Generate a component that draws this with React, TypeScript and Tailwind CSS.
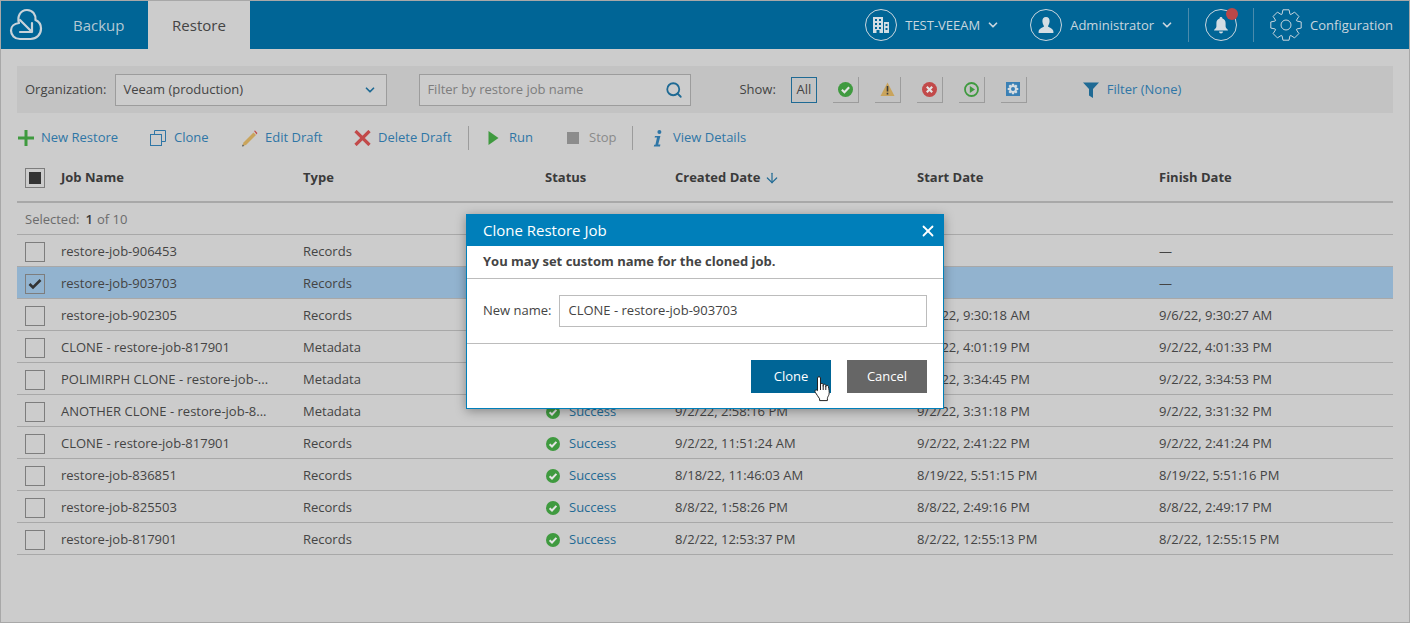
import { ChevronDown, X, Search, ArrowDown } from "lucide-react";
import type { ReactNode } from "react";

const ROWS = [
  { name: "restore-job-906453", type: "Records", status: "Running", created: "9/6/22, 10:12:41 AM", start: "", finish: "—" },
  { name: "restore-job-903703", type: "Records", status: "Draft", created: "9/6/22, 9:44:02 AM", start: "", finish: "—" },
  { name: "restore-job-902305", type: "Records", status: "Success", created: "9/6/22, 9:29:58 AM", start: "9/6/22, 9:30:18 AM", finish: "9/6/22, 9:30:27 AM" },
  { name: "CLONE - restore-job-817901", type: "Metadata", status: "Success", created: "9/2/22, 4:00:51 PM", start: "9/2/22, 4:01:19 PM", finish: "9/2/22, 4:01:33 PM" },
  { name: "POLIMIRPH CLONE - restore-job-...", type: "Metadata", status: "Success", created: "9/2/22, 3:34:12 PM", start: "9/2/22, 3:34:45 PM", finish: "9/2/22, 3:34:53 PM" },
  { name: "ANOTHER CLONE - restore-job-8...", type: "Metadata", status: "Success", created: "9/2/22, 2:58:16 PM", start: "9/2/22, 3:31:18 PM", finish: "9/2/22, 3:31:32 PM" },
  { name: "CLONE - restore-job-817901", type: "Records", status: "Success", created: "9/2/22, 11:51:24 AM", start: "9/2/22, 2:41:22 PM", finish: "9/2/22, 2:41:24 PM" },
  { name: "restore-job-836851", type: "Records", status: "Success", created: "8/18/22, 11:46:03 AM", start: "8/19/22, 5:51:15 PM", finish: "8/19/22, 5:51:16 PM" },
  { name: "restore-job-825503", type: "Records", status: "Success", created: "8/8/22, 1:58:26 PM", start: "8/8/22, 2:49:16 PM", finish: "8/8/22, 2:49:17 PM" },
  { name: "restore-job-817901", type: "Records", status: "Success", created: "8/2/22, 12:53:37 PM", start: "8/2/22, 12:55:13 PM", finish: "8/2/22, 12:55:15 PM" },
];

const COLS = "grid grid-cols-[44px_242px_242px_130px_242px_242px_1fr] items-center";

function gearPath(cx: number, cy: number, outer: number, inner: number, teeth: number) {
  const pts: string[] = [];
  const step = (Math.PI * 2) / teeth;
  for (let i = 0; i < teeth; i++) {
    const a = i * step - Math.PI / 2;
    const offs: [number, number][] = [
      [-0.5, inner], [-0.28, outer], [0.28, outer], [0.5, inner],
    ];
    offs.forEach(([o, r]) => {
      const t = a + o * step * 0.9;
      pts.push(`${(cx + r * Math.cos(t)).toFixed(2)} ${(cy + r * Math.sin(t)).toFixed(2)}`);
    });
  }
  return "M" + pts.join("L") + "Z";
}

function Logo() {
  return (
    <svg width="34" height="34" viewBox="0 0 34 34" fill="none" stroke="#c9d3d9" strokeWidth="2.2" strokeLinecap="round" strokeLinejoin="round">
      <path d="M10 15 C8 9 11 2 18 2 C24 2 27 7 26.5 12 C30 13.5 32 16.5 32 20.5 C32 26.5 27.5 31 21.5 31 L11 31 C5.5 31 2 27 2 22.5 C2 18.5 5 15.5 10 15 Z" />
      <path d="M11 12 L23 24 M23 15 L23 24 L11 24" />
    </svg>
  );
}

function Round({ children }: { children: ReactNode }) {
  return (
    <span className="relative w-8 h-8 rounded-full border border-[#c9d6de] flex items-center justify-center shrink-0">
      {children}
    </span>
  );
}

function StatusOk({ size = 14 }: { size?: number }) {
  return (
    <svg width={size} height={size} viewBox="0 0 14 14">
      <circle cx="7" cy="7" r="7" fill="#3f9a3f" />
      <path d="M3.6 7.2 L6 9.5 L10.4 4.9" fill="none" stroke="#e4e4e4" strokeWidth="2" />
    </svg>
  );
}

const SHOW: ReactNode[] = [
  <StatusOk key="ok" size={15} />,
  <svg key="warn" width="15" height="14" viewBox="0 0 15 14">
    <path d="M7.5 0.5 L14.5 14 L0.5 14 Z" fill="#c9a45c" />
    <path d="M7.5 4 V9.5 M7.5 10.8 V12.6" stroke="#3a3a3a" strokeWidth="1.6" />
  </svg>,
  <svg key="err" width="15" height="15" viewBox="0 0 15 15">
    <circle cx="7.5" cy="7.5" r="7.5" fill="#c24a4a" />
    <path d="M4.8 4.8 L10.2 10.2 M10.2 4.8 L4.8 10.2" stroke="#e4e4e4" strokeWidth="2.2" />
  </svg>,
  <svg key="run" width="15" height="15" viewBox="0 0 15 15">
    <circle cx="7.5" cy="7.5" r="6.5" fill="none" stroke="#3f9a3f" strokeWidth="1.8" />
    <path d="M5.8 4 L11 7.5 L5.8 11 Z" fill="#3f9a3f" />
  </svg>,
  <svg key="cfg" width="14" height="14" viewBox="0 0 14 14">
    <rect width="14" height="14" fill="#3a80b5" />
    <path d={gearPath(7, 7, 5.4, 3.9, 8)} fill="#d6dde2" />
    <circle cx="7" cy="7" r="2" fill="#3a80b5" />
  </svg>,
];

const ACTIONS: { label: string; icon: ReactNode; w: string; ml: string; muted?: boolean; sep?: string }[] = [
  {
    label: "New Restore", w: "w-[132px]", ml: "ml-[6px]",
    icon: <svg width="16" height="16" viewBox="0 0 16 16"><path d="M8 0 V16 M0 8 H16" stroke="#3f9a3f" strokeWidth="3" /></svg>,
  },
  {
    label: "Clone", w: "w-[91px]", ml: "ml-[7px]",
    icon: (
      <svg width="16" height="16" viewBox="0 0 16 16" fill="none" stroke="#2f76a6" strokeWidth="1">
        <path d="M4.5 4 V0.5 H15.5 V11.5 H11.5" />
        <rect x="0.5" y="4.5" width="11" height="11" />
      </svg>
    ),
  },
  {
    label: "Edit Draft", w: "w-[113px]", ml: "ml-[7px]",
    icon: (
      <svg width="17" height="17" viewBox="0 0 17 17">
        <path d="M12.5 2.5 L15 5 L5 15 L1.5 15.8 L2.5 12.5 Z" fill="#c9a45c" />
        <path d="M13 1 L14 0.6 L16.4 3 L15.6 4.4 Z" fill="#c24a4a" />
        <path d="M1 16.6 L1.6 14.4 L3.4 16 Z" fill="#555" />
      </svg>
    ),
  },
  {
    label: "Delete Draft", w: "w-[131px]", ml: "ml-[7px]", sep: "mr-[15px]",
    icon: <svg width="17" height="16" viewBox="0 0 17 16"><path d="M1.5 1 L15.5 15 M15.5 1 L1.5 15" stroke="#c24a4a" strokeWidth="3.2" /></svg>,
  },
  {
    label: "Run", w: "w-[80px]", ml: "ml-[7px]",
    icon: <svg width="11" height="14" viewBox="0 0 11 14"><path d="M0.5 0 L10.5 7 L0.5 14 Z" fill="#3f9a3f" /></svg>,
  },
  {
    label: "Stop", w: "w-[85px]", ml: "ml-[7px]", muted: true, sep: "mr-[16px]",
    icon: <svg width="12" height="12" viewBox="0 0 12 12"><rect width="12" height="12" fill="#8c8c8c" /></svg>,
  },
  {
    label: "View Details", w: "", ml: "ml-[6px]",
    icon: (
      <svg width="10" height="17" viewBox="0 0 10 17" fill="#2f76a6">
        <circle cx="6.4" cy="2" r="2" />
        <path d="M2 6 H7.4 L5.2 14.4 H7.4 L7 16.4 H0.8 L1.2 14.8 H2.4 L4 7.6 H1.6 Z" />
      </svg>
    ),
  },
];

function Check({ on, mixed }: { on?: boolean; mixed?: boolean }) {
  return (
    <span className="w-5 h-5 border border-[#7d7d7d] flex items-center justify-center">
      {mixed && <span className="w-3 h-3 bg-[#333333]" />}
      {on && (
        <svg width="14" height="12" viewBox="0 0 14 12">
          <path d="M1.5 6 L5 9.5 L12.5 2" fill="none" stroke="#333333" strokeWidth="2.6" />
        </svg>
      )}
    </span>
  );
}

function HandCursor({ className }: { className: string }) {
  return (
    <svg className={className} width="17" height="26" viewBox="0 0 17 26" fill="#ffffff" stroke="#222222" strokeWidth="1" strokeLinejoin="round">
      <path d="M3.5 2 C3.5 0.2 6.5 0.2 6.5 2 V10 L6.5 8.6 C6.5 7 9.2 7 9.2 8.6 V10.6 V9.4 C9.2 7.9 11.8 7.9 11.8 9.4 V11.2 V10.4 C11.8 9 14.4 9 14.4 10.4 C14.8 13 15.6 16 15 18.4 C14.6 20 13.4 21 13.4 22.6 V24.6 H5.6 V22.8 C4.6 20.6 2.4 18.8 1.2 16.2 C0.4 14.4 2 13 3.5 14.6 Z" />
      <path d="M6.5 10 V14 M9.2 10.6 V14 M11.8 11.2 V14" fill="none" />
    </svg>
  );
}

export default function App() {
  return (
    <div className="relative w-[1410px] h-[623px] overflow-hidden bg-[#cccccc] border border-[#a8a8a8] text-[13px] text-[#444444] font-['Open_Sans',sans-serif]">
      <header className="h-[48px] bg-[#006596] flex items-center text-[#c9d6de]">
        <div className="w-[147px] h-full flex items-center">
          <span className="ml-[8px] w-[34px] shrink-0"><Logo /></span>
          <span className="ml-[30px] text-[15px] text-[#b3c8d4]">Backup</span>
        </div>
        <div className="w-[102px] h-full bg-[#cccccc] flex items-center justify-center text-[15px] text-[#444444]">Restore</div>
        <div className="ml-auto flex items-center pr-[16px]">
          <Round>
            <svg width="18" height="18" viewBox="0 0 18 18" fill="#d3dde3">
              <path fillRule="evenodd" d="M1 1 H11 V17 H7.5 V14 H4.5 V17 H1 Z M3 3 V5 H5 V3 Z M7 3 V5 H9 V3 Z M3 7 V9 H5 V7 Z M7 7 V9 H9 V7 Z M3 11 V13 H5 V11 Z M7 11 V13 H9 V11 Z" />
              <path fillRule="evenodd" d="M12 6 H17 V17 H12 Z M13.5 8 V10 H15.5 V8 Z M13.5 12 V14 H15.5 V12 Z" />
            </svg>
          </Round>
          <span className="ml-[8px] pt-[2px]">TEST-VEEAM</span>
          <ChevronDown size={14} strokeWidth={3} className="ml-[6px]" />
          <span className="w-[30px]" />
          <Round>
            <svg width="18" height="18" viewBox="0 0 18 18" fill="#d3dde3">
              <path d="M9 1 C11.6 1 12.8 3 12.6 5.6 C12.4 8 11.2 9.6 11 10.2 C11 11.4 16.4 12 16.4 15.6 V17 H1.6 V15.6 C1.6 12 7 11.4 7 10.2 C6.8 9.6 5.6 8 5.4 5.6 C5.2 3 6.4 1 9 1 Z" />
            </svg>
          </Round>
          <span className="ml-[8px] pt-[2px]">Administrator</span>
          <ChevronDown size={14} strokeWidth={3} className="ml-[6px]" />
          <span className="ml-[14px] w-px h-[34px] bg-[#4a8bac]" />
          <span className="ml-[16px]">
            <Round>
              <svg width="16" height="18" viewBox="0 0 16 18" fill="#d3dde3">
                <path d="M8 1 C9 1 9.4 1.6 9.4 2.4 C11.6 3 12.6 4.8 12.6 7 V10.6 C12.6 12.4 15 13.4 15 14.6 H1 C1 13.4 3.4 12.4 3.4 10.6 V7 C3.4 4.8 4.4 3 6.6 2.4 C6.6 1.6 7 1 8 1 Z M6 15.4 H10 C10 16.6 9 17.4 8 17.4 C7 17.4 6 16.6 6 15.4 Z" />
              </svg>
              <span className="absolute -top-[2px] right-[-2px] w-3 h-3 rounded-full bg-[#bb4748]" />
            </Round>
          </span>
          <span className="ml-[16px] w-px h-[34px] bg-[#4a8bac]" />
          <svg className="ml-[16px]" width="32" height="34" viewBox="0 0 32 34" fill="none" stroke="#c9d6de" strokeWidth="1">
            <path d={gearPath(16, 17, 15.5, 11.5, 8)} strokeLinejoin="round" />
            <circle cx="16" cy="17" r="5" />
          </svg>
          <span className="ml-[8px] pt-[2px]">Configuration</span>
        </div>
      </header>

      <main className="px-[16px] pt-[17px]">
        <div className="h-[47px] bg-[#c3c3c3] flex items-center pl-[8px]">
          <span>Organization:</span>
          <div className="ml-[9px] w-[272px] h-[32px] border border-[#9c9c9c] bg-[#cccccc] flex items-center justify-between pl-[7px] pr-[8px]">
            <span>Veeam (production)</span>
            <ChevronDown size={14} strokeWidth={3} className="text-[#1f6a94] mr-[1px]" />
          </div>
          <div className="ml-[32px] w-[272px] h-[32px] border border-[#9c9c9c] bg-[#cccccc] flex items-center justify-between pl-[7px] pr-[8px] text-[#7d7d7d]">
            <span>Filter by restore job name</span>
            <Search size={18} strokeWidth={2.4} className="text-[#1f6a94] -mr-[1px]" />
          </div>
          <span className="ml-[48px]">Show:</span>
          <span className="ml-[15px] w-[26px] h-[26px] border border-[#1f6a94] flex items-center justify-center">All</span>
          <div className="ml-[16px] flex gap-[16px]">
            {SHOW.map((icon, i) => (
              <span key={i} className="w-[26px] h-[26px] border-r border-b border-[#9c9c9c] flex items-center justify-center">{icon}</span>
            ))}
          </div>
          <svg className="ml-[56px]" width="16" height="16" viewBox="0 0 16 16" fill="#1f6a94">
            <path d="M0 0.5 H16 L10 7 V16 L6 13.5 V7 Z" />
          </svg>
          <span className="ml-[8px] text-[#2f76a6]">Filter (None)</span>
        </div>

        <div className="h-[48px] flex items-center pt-[2px]">
          {ACTIONS.map((a) => (
            <div key={a.label} className={`flex items-center shrink-0 whitespace-nowrap h-full ${a.w}`}>
              <span className="w-[18px] flex justify-center shrink-0">{a.icon}</span>
              <span className={`${a.ml} ${a.muted ? "text-[#8a8a8a]" : "text-[#2f76a6]"}`}>{a.label}</span>
              {a.sep && <span className={`ml-auto ${a.sep} w-px h-[24px] bg-[#9c9c9c]`} />}
            </div>
          ))}
        </div>

        <div className={`${COLS} h-[42px] pb-[6px] border-b-2 border-[#a8a8a8] font-bold text-[#3a3a3a]`}>
          <span className="pl-[8px]"><Check mixed /></span>
          <span>Job Name</span>
          <span>Type</span>
          <span>Status</span>
          <span className="flex items-center gap-[4px]">Created Date <ArrowDown size={16} strokeWidth={1.8} className="text-[#1f6a94]" /></span>
          <span>Start Date</span>
          <span>Finish Date</span>
        </div>
        <div className="h-[32px] pt-[2px] border-b border-[#a8a8a8] flex items-center pl-[8px] text-[#6b6b6b]">
          Selected:<span className="ml-[6px] font-semibold text-[#3a3a3a]">1</span><span className="ml-[4px]">of 10</span>
        </div>
        {ROWS.map((r, i) => (
          <div key={i} className={`${COLS} h-[32px] pt-[2px] border-b border-[#a8a8a8] ${i === 1 ? "bg-[#92b3cf]" : ""}`}>
            <span className="pl-[8px]"><Check on={i === 1} /></span>
            <span>{r.name}</span>
            <span>{r.type}</span>
            <span className="flex items-center gap-[9px] pl-[1px] text-[#1f6a94]"><StatusOk /> {r.status}</span>
            <span>{r.created}</span>
            <span>{r.start}</span>
            <span>{r.finish}</span>
          </div>
        ))}
      </main>

      {/* clone dialog */}
      <div className="absolute left-[465px] top-[213px] w-[478px] h-[195px] bg-white border border-[#007fba] shadow-[0_2px_10px_rgba(0,0,0,0.35)] text-[#444444] flex flex-col">
        <div className="h-[31px] shrink-0 bg-[#007fba] flex items-center justify-between pl-[16px] pr-[6px] text-white text-[15px]">
          Clone Restore Job
          <X size={18} strokeWidth={2.4} />
        </div>
        <div className="h-[33px] shrink-0 border-b border-[#bcbcbc] flex items-center pl-[16px] font-bold">
          You may set custom name for the cloned job.
        </div>
        <div className="h-[65px] shrink-0 border-b border-[#bcbcbc] flex items-center pl-[16px]">
          New name:
          <div className="ml-[7px] w-[368px] h-[32px] border border-[#bcbcbc] flex items-center pl-[9px]">CLONE - restore-job-903703</div>
        </div>
        <div className="flex-1 flex justify-end items-start gap-[16px] pt-[16px] pr-[16px]">
          <button className="w-[80px] h-[33px] bg-[#006596] text-white">Clone</button>
          <button className="w-[80px] h-[33px] bg-[#666666] text-white">Cancel</button>
        </div>
      </div>
      <HandCursor className="absolute left-[813px] top-[375px]" />
    </div>
  );
}
